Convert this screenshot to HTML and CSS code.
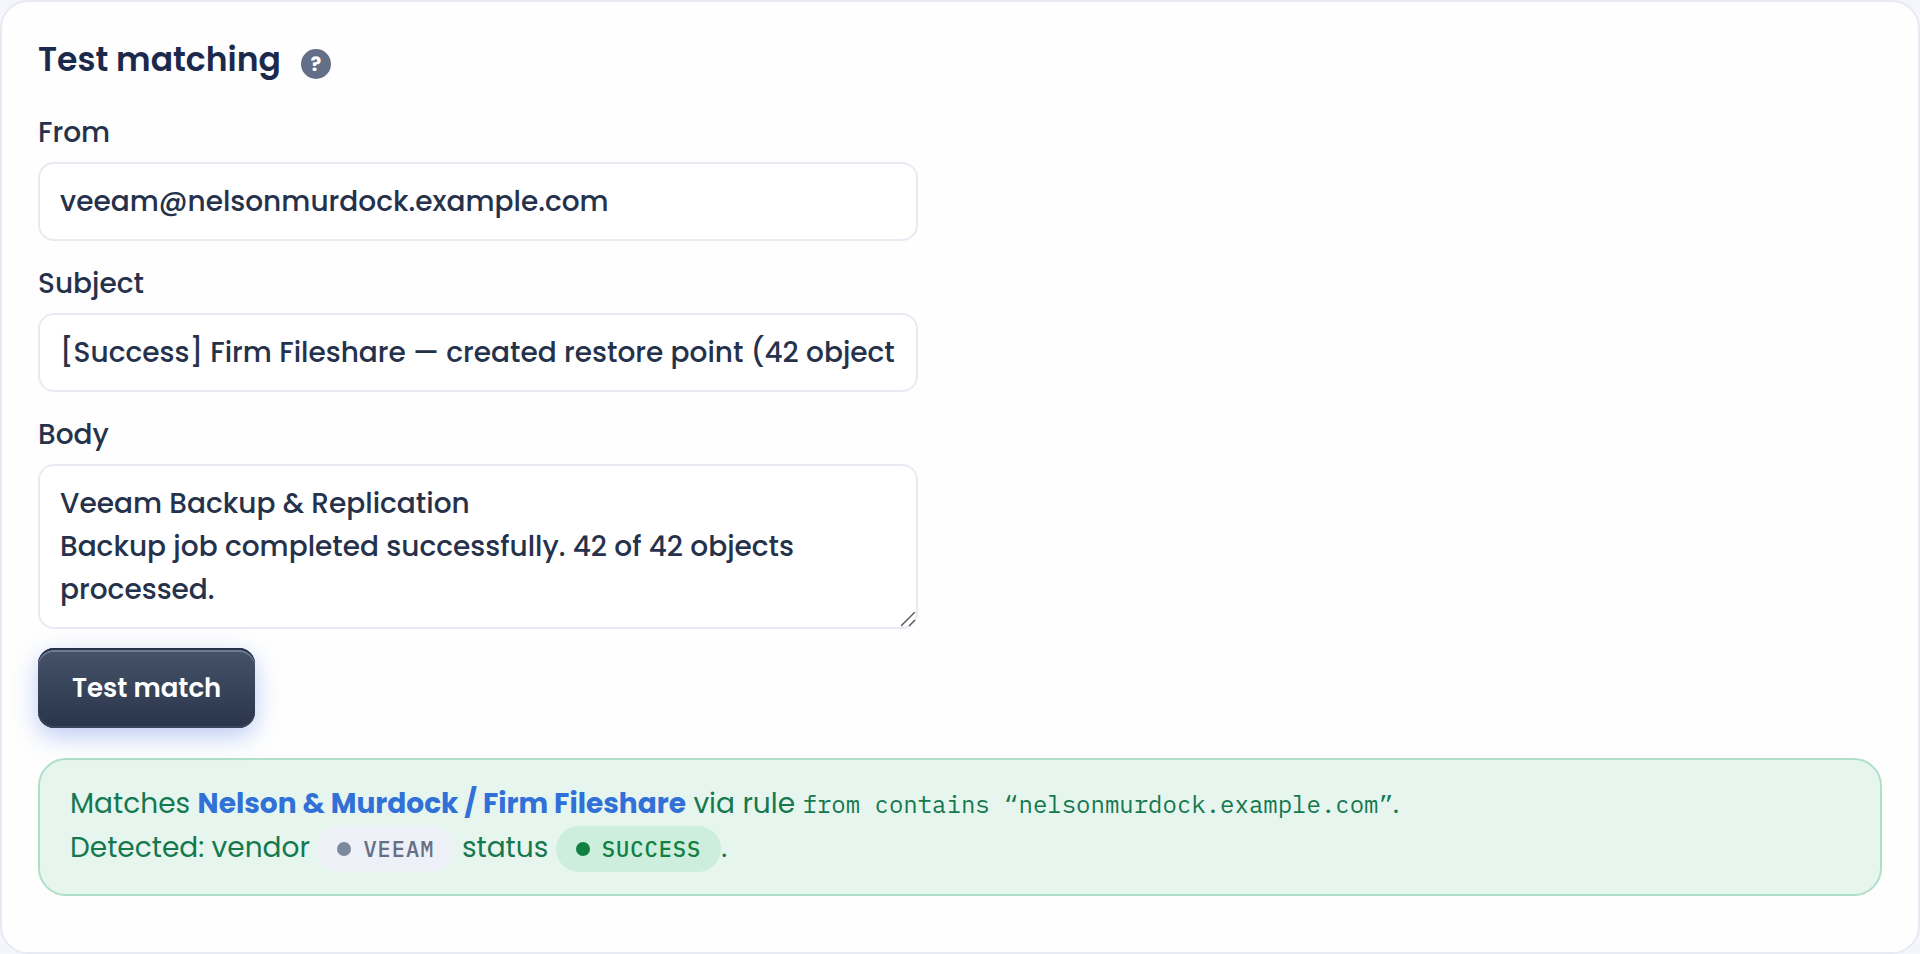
FILE: index.html
```html
<!DOCTYPE html>
<html lang="en">
<head>
<meta charset="utf-8">
<meta name="viewport" content="width=device-width, initial-scale=1">
<title>Test matching</title>
<link rel="stylesheet" href="styles.css">
</head>
<body>
<main class="card">
  <header class="card-head">
    <h2 class="card-title">Test matching</h2>
    <button class="help" type="button" aria-label="Help">?</button>
  </header>
  <form class="form">
    <div class="fields">
      <div class="field">
        <label class="label" for="from">From</label>
        <input class="control" id="from" type="text" value="veeam@nelsonmurdock.example.com">
      </div>
      <div class="field">
        <label class="label" for="subject">Subject</label>
        <input class="control" id="subject" type="text" value="[Success] Firm Fileshare — created restore point (42 object">
      </div>
      <div class="field">
        <label class="label" for="body">Body</label>
        <textarea class="control control-area" id="body" rows="3">Veeam Backup &amp; Replication
Backup job completed successfully. 42 of 42 objects processed.</textarea>
      </div>
    </div>
    <button class="submit" type="button">Test match</button>
  </form>
  <section class="result">
    <p class="line">Matches <a class="target" href="#">Nelson &amp; Murdock / Firm Fileshare</a> via rule <code class="rule">from contains “nelsonmurdock.example.com”</code>.</p>
    <p class="line">Detected: vendor <span class="chip">VEEAM</span> status <span class="chip chip-success">SUCCESS</span>.</p>
  </section>
</main>
</body>
</html>
```
FILE: styles.css
```css
* { box-sizing: border-box; }

body {
  margin: 0;
  background: #f4f6fc;
  color: #26324b;
  font-family: Poppins, Inter, sans-serif;
  font-size: 28px;
  line-height: 44px;
}

.card {
  min-height: 100vh;
  padding: 36px;
  border: 2px solid #e8eaf3;
  border-radius: 28px;
  background: #fefefe;
}

.card-head {
  display: flex;
  align-items: baseline;
  gap: 20px;
  margin-bottom: 29px;
}

.card-title {
  margin: 0;
  color: #1b2a4c;
  font-size: 33px;
  font-weight: 600;
  line-height: 44px;
}

.help {
  width: 30px;
  height: 30px;
  padding: 0;
  border: 0;
  border-radius: 50%;
  background: #636e87;
  color: #fff;
  font-family: inherit;
  font-size: 20px;
  font-weight: 700;
  line-height: 28px;
}

.form {
  display: flex;
  flex-direction: column;
  align-items: flex-start;
  gap: 19px;
  line-height: 43px;
}

.fields {
  display: flex;
  flex-direction: column;
  gap: 21px;
  width: 100%;
  max-width: 880px;
}

.field {
  display: flex;
  flex-direction: column;
  gap: 8px;
}

.label { font-weight: 500; }

.control {
  display: block;
  width: 100%;
  margin: 0;
  padding: 16px 20px;
  border: 2px solid #e8eaf2;
  border-radius: 16px;
  background: #fff;
  color: inherit;
  font: inherit;
  font-weight: 500;
}

.control-area { resize: vertical; }

.control-area::-webkit-resizer {
  background: url("data:image/svg+xml,%3Csvg xmlns='http://www.w3.org/2000/svg' viewBox='0 0 15 15'%3E%3Cpath d='M0 14L14 0M8 14L14 8' stroke='%23555' stroke-width='1.4'/%3E%3C/svg%3E") center / 15px 15px no-repeat;
}

.submit {
  padding: 18px 34px;
  border: 0;
  border-radius: 16px;
  background: linear-gradient(#465369, #2a354b);
  box-shadow: 0 8px 24px #3c6ee059, inset 0 2px #26324a, inset 0 4px #6e7c92, inset 0 -2px #3b475d;
  color: #fff;
  font-family: inherit;
  font-size: 26px;
  font-weight: 600;
  line-height: 44px;
}

.result {
  margin-top: 30px;
  padding: 22px 30px;
  border: 2px solid #afdfc8;
  border-radius: 28px;
  background: #e6f6ee;
  color: #15784f;
}

.line { margin: 0; }

.target {
  color: #3170d6;
  font-weight: 700;
  text-decoration: none;
}

.rule {
  font-family: "IBM Plex Mono", "Liberation Mono", monospace;
  font-size: 24px;
}

.chip {
  display: inline-flex;
  align-items: center;
  gap: 12px;
  height: 46px;
  padding: 0 20px;
  border-radius: 23px;
  background: #eef0f8;
  color: #667085;
  font-family: "IBM Plex Mono", "Liberation Mono", monospace;
  font-size: 22px;
  font-weight: 500;
  letter-spacing: 1px;
  vertical-align: middle;
}

.chip::before {
  content: "";
  width: 14px;
  height: 14px;
  border-radius: 50%;
  background: #7c889b;
}

.chip-success {
  background: #cdeedd;
  color: #108043;
}

.chip-success::before { background: #108043; }
```
